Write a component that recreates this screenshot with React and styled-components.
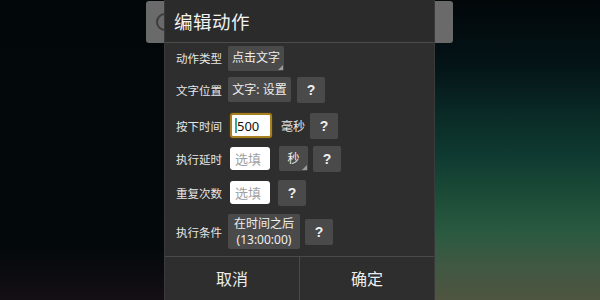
import React from 'react';
import styled, { createGlobalStyle } from 'styled-components';

const GlobalStyle = createGlobalStyle`
	html, body {
		margin: 0;
		padding: 0;
		background: #02070a;
	}
	body {
		font-family: 'Noto Sans', 'Noto Sans CJK SC', sans-serif;
	}
`;

const Screen = styled.div`
	position: relative;
	width: 600px;
	height: 300px;
	overflow: hidden;
	background:
		linear-gradient(to bottom, #02070a 0%, #03080b 82%, #140f15 100%) 0 0 / 300px 100% no-repeat,
		linear-gradient(
			to bottom,
			#02070a 0%,
			#041417 22%,
			#0a2a26 38%,
			#0f3a31 52%,
			#1d4d38 66%,
			#2b5a41 78%,
			#3f5842 88%,
			#4f5540 100%
		);
`;

const ActionBar = styled.div`
	margin: 1px 0 0 146px;
	width: 307px;
	height: 42px;
	border-radius: 3px;
	background: #6a6a6a;
	display: flex;
	align-items: center;
	padding-left: 10px;
	box-sizing: border-box;
`;

const BarIcon = styled.div`
	width: 14px;
	height: 14px;
	border-radius: 50%;
	border: 2px solid #3c3c3c;
`;

const Dialog = styled.div`
	position: absolute;
	top: 0;
	left: 164px;
	width: 271px;
	height: 310px;
	background: #2e2e2e;
	border-left: 1px solid #3a3a3a;
	border-right: 1px solid #3a3a3a;
	box-sizing: border-box;
	display: flex;
	flex-direction: column;
`;

const Title = styled.div`
	height: 42px;
	flex: none;
	display: flex;
	align-items: center;
	padding-left: 9px;
	background: #2b2b2b;
	border-bottom: 1px solid #4c4c4c;
	color: #f2f2f2;
	font-size: 18.5px;
	letter-spacing: 0.5px;
`;

const Body = styled.div`
	display: flex;
	flex-direction: column;
	padding: 0 0 6px 11px;
`;

const Row = styled.div`
	height: ${p => p.h}px;
	display: flex;
	align-items: center;
`;

const Label = styled.span`
	width: 52px;
	flex: none;
	color: #e6e6e6;
	font-size: 11.5px;
	white-space: nowrap;
`;

const Button = styled.div`
	position: relative;
	height: ${p => p.tall ? 35 : 25}px;
	min-width: ${p => p.w || 0}px;
	margin-left: ${p => p.gap || 0}px;
	padding: 0 4px;
	box-sizing: border-box;
	display: flex;
	align-items: center;
	justify-content: center;
	text-align: center;
	background: #4a4a4a;
	border-radius: 2px;
	color: #eeeeee;
	font-size: 12px;
	line-height: 16px;
	white-space: nowrap;
`;

const SpinnerMark = styled.span`
	position: absolute;
	right: 1px;
	bottom: 1px;
	width: 0;
	height: 0;
	border-left: 5px solid transparent;
	border-bottom: 5px solid #9a9a9a;
`;

const Help = styled(Button)`
	width: 28px;
	min-width: 28px;
	height: 26px;
	padding: 0;
	font-weight: bold;
	font-family: 'Liberation Sans', 'Noto Sans', sans-serif;
	font-size: 14px;
`;

const Input = styled.div`
	width: ${p => p.focused ? 42 : 40}px;
	height: ${p => p.focused ? 25 : 23}px;
	margin-left: 2px;
	box-sizing: border-box;
	display: flex;
	align-items: center;
	padding-left: ${p => p.focused ? 3 : 5}px;
	background: #ffffff;
	border-radius: 3px;
	border: ${p => p.focused ? '2px solid #a8801f' : 'none'};
	box-shadow: ${p => p.focused ? '0 0 2px #6a5010' : 'none'};
	color: ${p => p.placeholder ? '#a0a0a0' : '#111'};
	font-size: 13px;
`;

const Caret = styled.span`
	width: 2px;
	height: 15px;
	background: #3aa79a;
`;

const Unit = styled.span`
	margin-left: 9px;
	color: #e6e6e6;
	font-size: 12px;
`;

const Footer = styled.div`
	margin-top: auto;
	height: 54px;
	flex: none;
	display: grid;
	grid-template-columns: 134px 1fr;
	border-top: 1px solid #4a4a4a;
`;

const FooterButton = styled.div`
	display: flex;
	justify-content: center;
	padding-top: 9px;
	color: #ececec;
	font-size: 16px;
	& + & {
		border-left: 1px solid #4a4a4a;
	}
`;

const App = () => {
	return (
		<>
			<GlobalStyle />
			<Screen>
				<ActionBar>
					<BarIcon />
				</ActionBar>
				<Dialog>
					<Title>编辑动作</Title>
					<Body>
						<Row h={30}>
							<Label>动作类型</Label>
							<Button w={56}>
								点击文字
								<SpinnerMark />
							</Button>
						</Row>
						<Row h={33}>
							<Label>文字位置</Label>
							<Button w={63}>文字: 设置</Button>
							<Help gap={6}>?</Help>
						</Row>
						<Row h={39}>
							<Label>按下时间</Label>
							<Input focused>
								<Caret />
								500
							</Input>
							<Unit>毫秒</Unit>
							<Help gap={5}>?</Help>
						</Row>
						<Row h={27}>
							<Label>执行延时</Label>
							<Input placeholder>选填</Input>
							<Button w={29} gap={9}>
								秒
								<SpinnerMark />
							</Button>
							<Help gap={5}>?</Help>
						</Row>
						<Row h={41}>
							<Label>重复次数</Label>
							<Input placeholder>选填</Input>
							<Help gap={8}>?</Help>
						</Row>
						<Row h={37}>
							<Label>执行条件</Label>
							<Button tall w={72}>
								在时间之后
								<br />
								(13:00:00)
							</Button>
							<Help gap={5}>?</Help>
						</Row>
					</Body>
					<Footer>
						<FooterButton>取消</FooterButton>
						<FooterButton>确定</FooterButton>
					</Footer>
				</Dialog>
			</Screen>
		</>
	);
};

export default App;
